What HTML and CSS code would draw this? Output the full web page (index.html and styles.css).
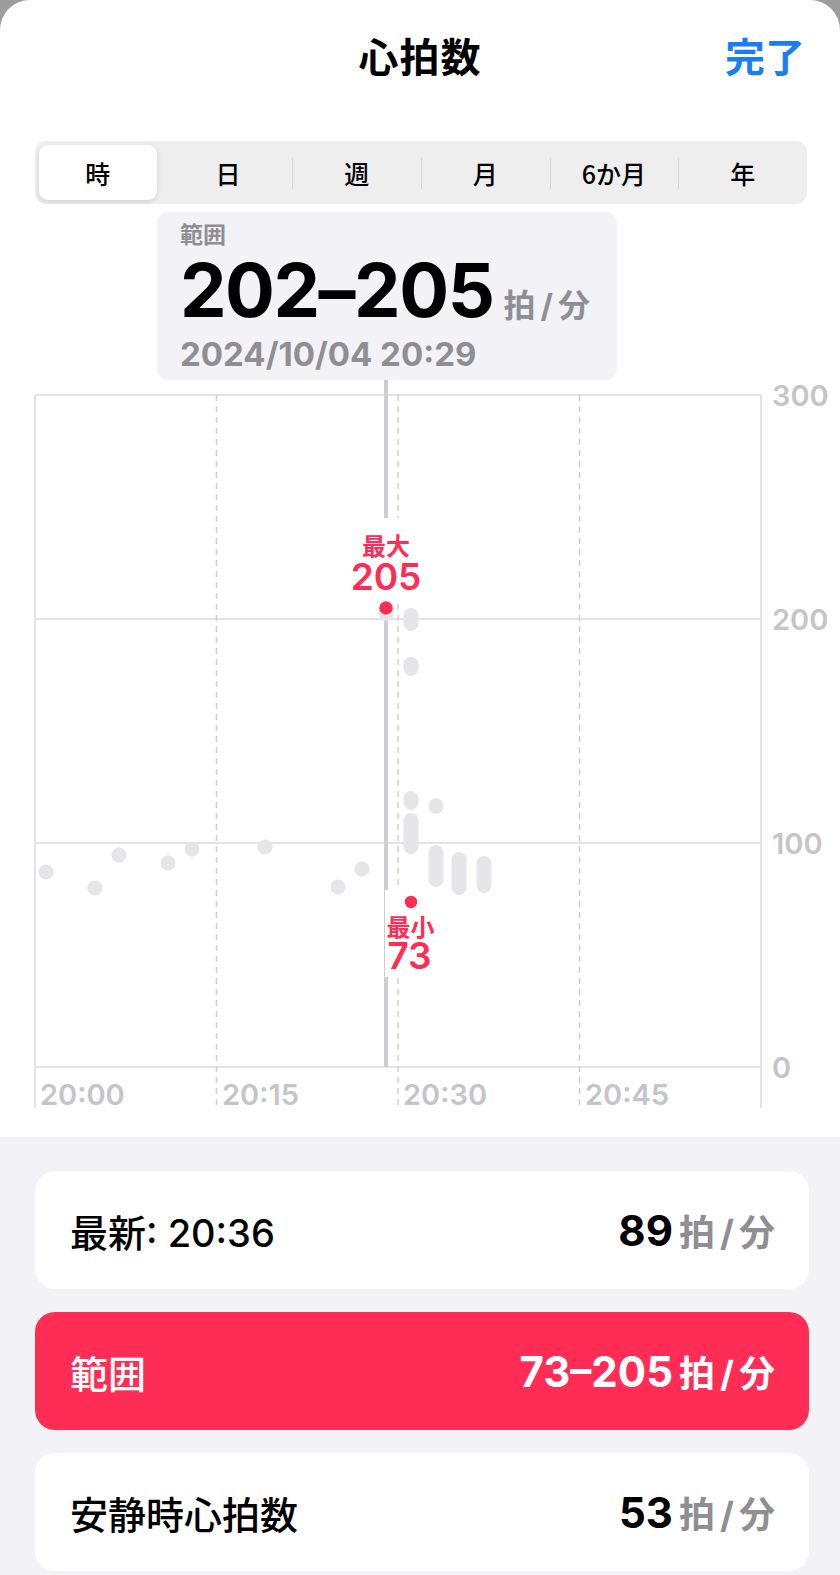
FILE: index.html
```html
<!DOCTYPE html>
<html lang="ja">

<head>
    <meta charset="UTF-8">
    <meta name="viewport" content="width=device-width, initial-scale=1.0">
    <title>心拍数</title>
    <link rel="stylesheet" href="styles.css">
</head>

<body>
    <div class="sheet">
        <header class="nav">
            <span></span>
            <h1 class="nav-title">心拍数</h1>
            <a class="nav-done" href="">完了</a>
        </header>

        <nav class="segments">
            <div class="seg seg-active">時</div>
            <div class="seg">日</div>
            <div class="seg seg-line">週</div>
            <div class="seg seg-line">月</div>
            <div class="seg seg-line">6か月</div>
            <div class="seg seg-line">年</div>
        </nav>

        <section class="chart">
            <svg class="plot" width="840" height="933" viewBox="0 0 840 933">
                <!-- grid -->
                <g class="grid">
                    <line x1="35" y1="191" x2="761" y2="191" />
                    <line x1="35" y1="415" x2="761" y2="415" />
                    <line x1="35" y1="639" x2="761" y2="639" />
                    <line x1="35" y1="863" x2="761" y2="863" />
                    <line x1="35" y1="191" x2="35" y2="904" />
                    <line x1="761" y1="191" x2="761" y2="904" />
                </g>
                <g class="grid-dash">
                    <line x1="216.5" y1="191" x2="216.5" y2="904" />
                    <line x1="398" y1="191" x2="398" y2="904" />
                    <line x1="579.5" y1="191" x2="579.5" y2="904" />
                </g>

                <text class="axis-y" x="772" y="191">300</text>
                <text class="axis-y" x="772" y="415">200</text>
                <text class="axis-y" x="772" y="639">100</text>
                <text class="axis-y" x="772" y="863">0</text>

                <text class="axis-x" x="40" y="890">20:00</text>
                <text class="axis-x" x="222" y="890">20:15</text>
                <text class="axis-x" x="403" y="890">20:30</text>
                <text class="axis-x" x="585" y="890">20:45</text>

                <!-- selection -->
                <line class="cursor" x1="386" y1="176" x2="386" y2="863" />

                <!-- readings -->
                <g class="pts">
                    <circle cx="46" cy="668" r="7.5" />
                    <circle cx="95" cy="684" r="7.5" />
                    <circle cx="119" cy="651" r="7.5" />
                    <circle cx="168" cy="659" r="7.5" />
                    <circle cx="192" cy="645" r="7.5" />
                    <circle cx="265" cy="643" r="7.5" />
                    <circle cx="338" cy="683" r="7.5" />
                    <circle cx="362" cy="665" r="7.5" />
                    <rect x="378.5" y="396" width="15" height="21" rx="7.5" />
                    <rect x="403.5" y="404" width="15" height="23" rx="7.5" />
                    <rect x="403.5" y="453" width="15" height="19" rx="7.5" />
                    <rect x="403.5" y="587" width="15" height="19" rx="7.5" />
                    <rect x="403.5" y="609" width="15" height="41" rx="7.5" />
                    <rect x="428.5" y="594" width="15" height="16" rx="7.5" />
                    <rect x="428.5" y="641" width="15" height="42" rx="7.5" />
                    <rect x="451.5" y="648" width="15" height="43" rx="7.5" />
                    <rect x="476.5" y="652" width="15" height="37" rx="7.5" />
                </g>

                <!-- max / min labels -->
                <rect class="tag-bg" x="345" y="314" width="83" height="84" />
                <text class="tag-name" x="386" y="340">最大</text>
                <text class="tag-num" x="386" y="372">205</text>
                <circle class="hit" cx="386" cy="404" r="7.5" />

                <rect class="tag-bg" x="385" y="686" width="52" height="87" />
                <circle class="hit" cx="411" cy="698" r="7" />
                <text class="tag-name" x="410.5" y="721">最小</text>
                <text class="tag-num" x="409.5" y="751">73</text>
            </svg>

            <div class="callout">
                <div class="callout-label">範囲</div>
                <div class="callout-value">202–205<span class="unit">拍<i>/</i>分</span></div>
                <div class="callout-date">2024/10/04 20:29</div>
            </div>
        </section>

        <section class="summary">
            <div class="stat">
                <span class="stat-label">最新: 20:36</span>
                <span class="stat-value">89<span class="unit">拍<i>/</i>分</span></span>
            </div>
            <div class="stat stat-red">
                <span class="stat-label">範囲</span>
                <span class="stat-value">73–205<span class="unit">拍<i>/</i>分</span></span>
            </div>
            <div class="stat">
                <span class="stat-label">安静時心拍数</span>
                <span class="stat-value">53<span class="unit">拍<i>/</i>分</span></span>
            </div>
        </section>
    </div>
</body>

</html>
```

FILE: styles.css
```css
:root {
    --col-red: #ff2d55;
    --col-blue: #1a7ef2;
    --col-gray: #8e8e93;
    --col-light: #c4c4c9;
    --col-dot: #e5e5ea;
    --col-group: #f2f2f7;
    --font-main: "Inter", "Noto Sans CJK JP", sans-serif;
}

html, body {
    margin: 0;
    padding: 0;
}

body {
    background: #9d9d9f;
    font-family: var(--font-main);
    color: #000;
}

.sheet {
    width: 840px;
    min-height: 1575px;
    background: #fff;
    border-radius: 30px 30px 0 0;
    overflow: hidden;
    display: flex;
    flex-direction: column;
}

.nav {
    height: 110px;
    display: grid;
    grid-template-columns: 1fr auto 1fr;
    align-items: center;
    padding: 0 35px;
}

.nav-title {
    margin: 0;
    font-size: 40px;
    font-weight: 700;
    font-family: "Noto Sans CJK JP", sans-serif;
    letter-spacing: 1px;
}

.nav-done {
    justify-self: end;
    font-size: 40px;
    font-weight: 700;
    font-family: "Noto Sans CJK JP", sans-serif;
    color: var(--col-blue);
    text-decoration: none;
}

.segments {
    margin: 31px 33px 0 35px;
    height: 63px;
    background: #eeeeef;
    border-radius: 11px;
    display: grid;
    grid-template-columns: repeat(6, 1fr);
}

.seg {
    position: relative;
    display: flex;
    align-items: center;
    justify-content: center;
    font-size: 25px;
    font-weight: 500;
    font-family: "Noto Sans CJK JP", sans-serif;
}

.seg-active {
    margin: 4px 7px 4px 4px;
    background: #fff;
    border-radius: 9px;
    box-shadow: 0 2px 5px rgba(0, 0, 0, 0.12);
}

.seg-line::before {
    content: "";
    position: absolute;
    left: 0;
    top: 17px;
    bottom: 15px;
    border-left: 1.5px solid #d6d6da;
}

.chart {
    position: relative;
    height: 933px;
}

.plot {
    display: block;
}

.grid line {
    stroke: #e3e3e6;
    stroke-width: 2;
}

.grid-dash line {
    stroke: #cfcfd3;
    stroke-width: 1.5;
    stroke-dasharray: 6 5;
}

.axis-y,
.axis-x {
    font-family: var(--font-main);
    font-size: 29px;
    font-weight: 600;
    fill: var(--col-light);
    dominant-baseline: central;
}

.cursor {
    stroke: #cdcdd2;
    stroke-width: 4;
}

.pts circle,
.pts rect {
    fill: var(--col-dot);
}

.tag-bg {
    fill: #fff;
}

.hit {
    fill: var(--col-red);
    stroke: #fff;
    stroke-width: 1.5;
}

.tag-name {
    font-family: "Noto Sans CJK JP", sans-serif;
    font-size: 24px;
    font-weight: 700;
    fill: var(--col-red);
    text-anchor: middle;
    dominant-baseline: central;
}

.tag-num {
    font-family: var(--font-main);
    font-size: 37px;
    font-weight: 600;
    fill: var(--col-red);
    text-anchor: middle;
    dominant-baseline: central;
}

.callout {
    position: absolute;
    left: 157px;
    top: 8px;
    width: 460px;
    height: 168px;
    box-sizing: border-box;
    padding: 6px 0 0 23px;
    background: var(--col-group);
    border-radius: 11px;
}

.callout-label {
    font-family: "Noto Sans CJK JP", sans-serif;
    font-size: 23px;
    font-weight: 700;
    line-height: 30px;
    color: var(--col-gray);
}

.callout-value {
    height: 84px;
    font-size: 74px;
    font-weight: 700;
    line-height: 84px;
    letter-spacing: -1.5px;
    white-space: nowrap;
}

.callout-value .unit {
    margin-left: 10px;
    font-size: 32px;
    line-height: 1;
    letter-spacing: 0;
}

.callout-date {
    margin-top: 2px;
    font-size: 33px;
    font-weight: 700;
    line-height: 40px;
    color: var(--col-gray);
}

.unit {
    font-family: "Noto Sans CJK JP", sans-serif;
    font-weight: 700;
    color: var(--col-gray);
}

.unit i {
    font-style: normal;
    font-family: "Inter", sans-serif;
    margin: 0 5px;
}

.summary {
    flex: 1;
    background: var(--col-group);
    padding: 34px 31px 5px 35px;
    display: flex;
    flex-direction: column;
    gap: 23px;
}

.stat {
    height: 118px;
    box-sizing: border-box;
    padding: 0 34px 0 35px;
    background: #fff;
    border-radius: 20px;
    display: flex;
    align-items: center;
    justify-content: space-between;
}

.stat-label {
    font-size: 38px;
    font-weight: 500;
}

.stat-value {
    font-size: 42px;
    font-weight: 700;
    display: flex;
    align-items: baseline;
}

.stat-value .unit {
    margin-left: 6px;
    font-size: 36px;
}

.stat-red {
    background: var(--col-red);
    color: #fff;
}

.stat-red .unit {
    color: #fff;
}
```
